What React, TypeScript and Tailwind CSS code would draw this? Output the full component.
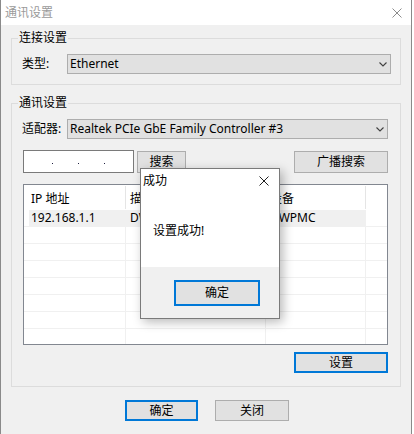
import React from "react";

const font = "font-['Noto_Sans','Noto_Sans_CJK_SC',sans-serif]";

function Chevron() {
  return (
    <svg width="8" height="5" viewBox="0 0 8 5" className="shrink-0">
      <polyline points="0.5,0.5 4,4 7.5,0.5" fill="none" stroke="#404040" strokeWidth="1.1" />
    </svg>
  );
}

function Cross({ color, size }: { color: string; size: number }) {
  return (
    <svg width={size} height={size} viewBox="0 0 10 10">
      <line x1="0.5" y1="0.5" x2="9.5" y2="9.5" stroke={color} strokeWidth="1" />
      <line x1="9.5" y1="0.5" x2="0.5" y2="9.5" stroke={color} strokeWidth="1" />
    </svg>
  );
}

function Select({ text, width }: { text: string; width: string }) {
  return (
    <div className={`${width} h-[20px] border border-[#adadad] bg-[#e1e1e1] flex items-center pl-[2px] pr-[3px]`}>
      <span className="flex-1 leading-[16px] whitespace-nowrap">{text}</span>
      <Chevron />
    </div>
  );
}

const rows = [
  ["192.168.1.1", "DWPMC", "DWPMC"],
  ["", "", ""],
  ["", "", ""],
  ["", "", ""],
  ["", "", ""],
  ["", "", ""],
  ["", "", ""],
  ["", "", ""],
];

function DeviceList() {
  return (
    <div className="ml-[11px] w-[365px] h-[161px] border border-[#828790] bg-white overflow-hidden">
      <div className="flex h-[25px]">
        <div className="w-[102px] pl-[7px] pt-[4px] border-r border-[#e5e5e5] my-[1px] leading-[18px] whitespace-nowrap">IP 地址</div>
        <div className="w-[140px] pl-[4px] pt-[4px] border-r border-[#e5e5e5] my-[1px] leading-[18px]">描述</div>
        <div className="w-[100px] pl-[4px] pt-[4px] border-r border-[#e5e5e5] my-[1px] leading-[18px]">设备</div>
        <div className="flex-1" />
      </div>
      {rows.map((r, i) => {
        const sel = i === 0;
        return (
          <div key={i} className="flex h-[17px]">
            <div className="w-[102px] pl-[5px] border-r border-b border-[#f0f0f0]">
              <div className={`h-full pl-[2px] leading-[16px] whitespace-nowrap ${sel ? "bg-[#f0f0f0]" : ""}`}>{r[0]}</div>
            </div>
            <div className={`w-[140px] pl-[4px] border-r border-b border-[#f0f0f0] leading-[16px] ${sel ? "bg-[#f0f0f0]" : ""}`}>{r[1]}</div>
            <div className={`w-[100px] pl-[4px] border-r border-b border-[#f0f0f0] leading-[16px] ${sel ? "bg-[#f0f0f0]" : ""}`}>{r[2]}</div>
            <div className="flex-1 border-b border-[#f0f0f0]" />
          </div>
        );
      })}
    </div>
  );
}

export default function App() {
  return (
    <div className={`relative w-[414px] h-[434px] overflow-hidden bg-white text-[12px] text-black ${font}`}>
      <div className="w-[412px] h-full border-x border-[#8a8a8a] flex flex-col">
        <div className="h-[25px] bg-white flex items-center pl-[4px] pr-[9px] shrink-0">
          <span className="flex-1 text-[#9a9a9a] leading-[16px]">通讯设置</span>
          <Cross color="#8c8c8c" size={10} />
        </div>

        <div className="flex-1 bg-[#f0f0f0] pt-[6px]">
          <fieldset className="ml-[10px] w-[390px] border border-[#dcdcdc] pt-[9px] pb-[10px]">
            <legend className="ml-[6px] px-[1px] leading-[14px]">连接设置</legend>
            <div className="flex items-center">
              <span className="ml-[10px] w-[45px]">类型:</span>
              <Select text="Ethernet" width="w-[324px]" />
            </div>
          </fieldset>

          <fieldset className="mt-[11px] ml-[10px] w-[390px] border border-[#dcdcdc] pt-[9px] pb-[13px]">
            <legend className="ml-[6px] px-[1px] leading-[14px]">通讯设置</legend>
            <div className="flex items-center">
              <span className="ml-[10px] w-[45px] whitespace-nowrap">适配器:</span>
              <Select text="Realtek PCIe GbE Family Controller #3" width="w-[321px]" />
            </div>

            <div className="flex items-start mt-[11px]">
              <div className="ml-[11px] w-[111px] h-[23px] bg-white border border-[#7a7a7a] flex items-center">
                <span className="ml-[28px] w-[1px] h-[1px] bg-[#202040] mt-[3px]" />
                <span className="ml-[25px] w-[1px] h-[1px] bg-[#202040] mt-[3px]" />
                <span className="ml-[25px] w-[1px] h-[1px] bg-[#202040] mt-[3px]" />
              </div>
              <button className="ml-[3px] mt-[1px] w-[49px] h-[22px] border border-[#adadad] bg-[#e1e1e1] leading-[18px]">搜索</button>
              <button className="ml-[108px] mt-[1px] w-[94px] h-[22px] border border-[#adadad] bg-[#e1e1e1] leading-[18px]">广播搜索</button>
            </div>

            <div className="mt-[11px]">
              <DeviceList />
            </div>

            <div className="mt-[7px] flex">
              <button className="ml-[282px] w-[94px] h-[21px] border-2 border-[#0078d7] bg-[#e1e1e1] leading-[16px]">设置</button>
            </div>
          </fieldset>

          <div className="mt-[13px] flex">
            <button className="ml-[124px] w-[73px] h-[21px] border-2 border-[#0078d7] bg-[#e1e1e1] leading-[16px]">确定</button>
            <button className="ml-[17px] w-[74px] h-[21px] border border-[#adadad] bg-[#e1e1e1] leading-[16px]">关闭</button>
          </div>
        </div>
      </div>

      <div className="absolute left-[140px] top-[168px] w-[140px] h-[151px] border border-[#7a7a7a] bg-white flex flex-col shadow-[3px_3px_10px_rgba(0,0,0,0.28)]">
        <div className="h-[24px] flex items-center pl-[2px] pr-[10px] shrink-0">
          <span className="flex-1 leading-[16px]">成功</span>
          <Cross color="#202020" size={10} />
        </div>
        <div className="flex-1 pl-[12px] pt-[31px]">
          <div className="leading-[14px]">设置成功!</div>
        </div>
        <div className="h-[51px] bg-[#f0f0f0] pl-[33px] pt-[13px] shrink-0">
          <button className="w-[86px] h-[26px] border-2 border-[#0078d7] bg-[#e1e1e1] leading-[20px]">确定</button>
        </div>
      </div>
    </div>
  );
}
